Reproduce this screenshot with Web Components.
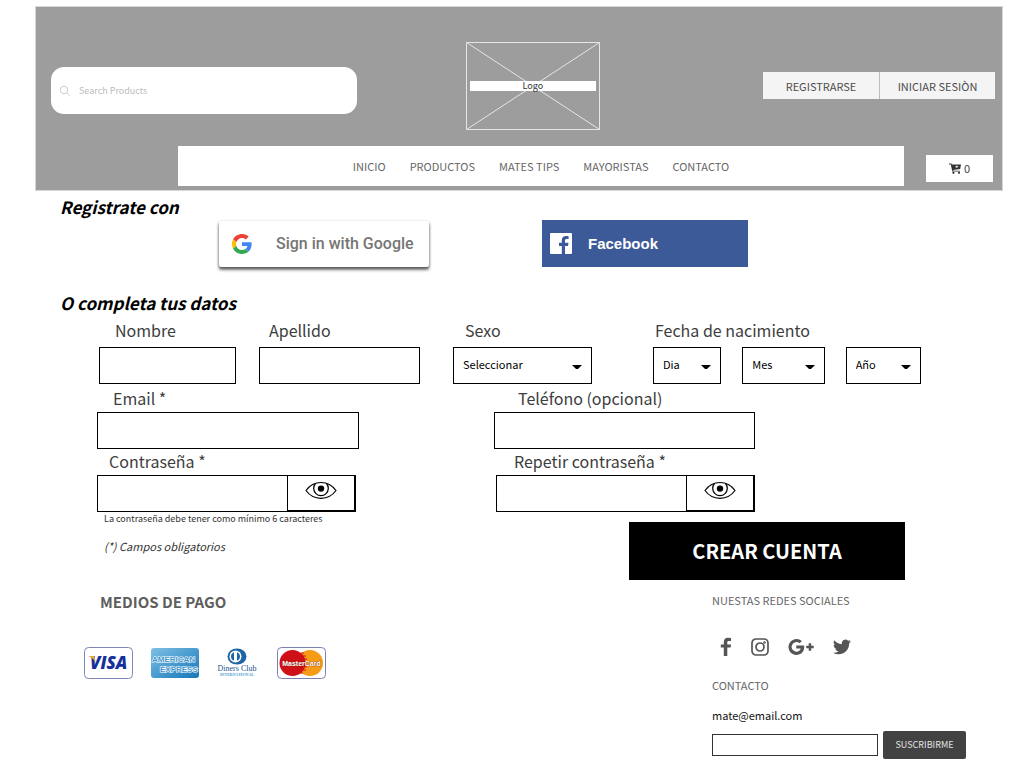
<!DOCTYPE html>
<html lang="es">
<head>
<meta charset="utf-8">
<title>Crear cuenta</title>
<style>
  body { margin: 0; background: #fff; color: #333; font-family: "Noto Sans CJK SC", "Noto Sans", sans-serif; font-size: 13px; }
</style>
</head>
<body>
<register-page></register-page>
<script>
const BASE = `*{box-sizing:border-box} :host{display:block} a{color:inherit;text-decoration:none}
button,input,select{font-family:inherit;margin:0;border-radius:0}`;
function define(name, css, html) {
  customElements.define(name, class extends HTMLElement {
    constructor() {
      super();
      const root = this.attachShadow({ mode: 'open' });
      const attr = key => this.getAttribute(key) || '';
      root.innerHTML = `<style>${BASE}${css}</style>` + (typeof html === 'function' ? html(attr) : html);
    }
  });
}

define('search-box', `
  form{display:flex;align-items:center;width:306px;max-width:100%;height:47px;border-radius:13px;background:#fff;padding:1px 8px 0;gap:8px}
  svg{width:12px;height:12px;flex:none}
  input{flex:1;min-width:0;border:0;outline:0;background:none;font-size:9px;line-height:16px;padding:0;color:#555}
  input::placeholder{color:#bcbcbc;opacity:1}`,
  `<form role="search"><svg viewBox="0 0 12 12" fill="none" stroke="#ccc"><circle cx="5" cy="5" r="3.7"/><path d="M7.7 7.7l3 3"/></svg>
  <input type="search" aria-label="Search Products" placeholder="Search Products"></form>`);

define('site-logo', `
  a{display:grid;width:134px;height:88px;align-items:center;color:#333}
  svg,span{grid-area:1/1}
  svg{width:134px;height:88px}
  span{background:#fff;margin:0 4px;height:10px;line-height:10px;font-size:9px;text-align:center;z-index:1}`,
  `<a href="#"><svg viewBox="0 0 134 88" fill="none" stroke="#e6e6e6"><path d="M.5 .5h133v87H.5zM.5 .5l133 87M133.5 .5l-133 87"/></svg><span>Logo</span></a>`);

define('auth-links', `
  nav{display:flex;height:27px;background:#f4f4f4}
  a{width:116px;text-align:center;font-size:11px;line-height:28px;color:#4c4c4c}
  a+a{border-left:1px solid #bbb}`,
  `<nav aria-label="Cuenta"><a href="#">REGISTRARSE</a><a href="#">INICIAR SESIÒN</a></nav>`);

define('main-nav', `
  nav{display:flex;justify-content:center;gap:24px;height:40px;background:#fff;line-height:40px;font-size:11px;color:#666}`,
  `<nav aria-label="Principal"><slot></slot></nav>`);

define('cart-button', `
  button{display:flex;align-items:center;justify-content:center;gap:3px;width:67px;height:27px;border:0;background:#fff;color:#444;font-size:11px;line-height:27px;padding:0}
  svg{width:12px;height:11px}`,
  `<button type="button" aria-label="Carrito: 0"><svg viewBox="0 0 12 11" fill="#333"><path d="M0 .5h2.4l.4 1.1H12L11.2 6 4.2 6.9l.2.8H11v.9H3.3L1.8 1.5H0z"/><circle cx="4.4" cy="9.8" r="1.1"/><circle cx="10" cy="9.8" r="1.1"/><path d="M6.3 3.7h3M7.8 2.6v2.4" stroke="#fff" stroke-width=".8"/></svg>0</button>`);

define('site-header', `
  header{background:#9d9d9d;border:1px solid #d6d6d6;padding:35px 7px 4px 15px}
  .top{display:grid;grid-template-columns:211fr 134px 201fr;align-items:center}
  search-box{padding-top:8px}
  auth-links{justify-self:end;padding-bottom:2px}
  .bottom{display:flex;gap:22px;margin-top:16px;padding:0 2px 0 127px}
  main-nav{flex:1}
  cart-button{align-self:end;padding-bottom:4px}`,
  `<header><div class="top"><search-box></search-box><site-logo></site-logo><auth-links></auth-links></div>
  <div class="bottom"><main-nav><a href="#">INICIO</a><a href="#">PRODUCTOS</a><a href="#">MATES TIPS</a><a href="#">MAYORISTAS</a><a href="#">CONTACTO</a></main-nav>
  <cart-button></cart-button></div></header>`);

define('section-title', `h2{margin:0;font-size:17px;line-height:26px;font-weight:700;font-style:italic;color:#000}`, `<h2><slot></slot></h2>`);

define('google-button', `
  button{display:flex;align-items:center;gap:24px;width:210px;height:46px;border:0;border-radius:2px;background:#fff;padding:0 0 0 13px;box-shadow:0 3px 3px rgba(0,0,0,.5),0 1px 3px rgba(0,0,0,.4);font:500 16px/24px Roboto,sans-serif;color:#757575;white-space:nowrap}
  svg{width:20px;height:20px;flex:none}`,
  `<button type="button"><svg viewBox="0 0 48 48"><path fill="#EA4335" d="M24 9.5c3.54 0 6.71 1.22 9.21 3.6l6.85-6.85C35.9 2.38 30.47 0 24 0 14.62 0 6.51 5.38 2.56 13.22l7.98 6.19C12.43 13.72 17.74 9.5 24 9.5z"/><path fill="#4285F4" d="M46.98 24.55c0-1.57-.15-3.09-.38-4.55H24v9.02h12.94c-.58 2.96-2.26 5.48-4.78 7.18l7.73 6c4.51-4.18 7.09-10.36 7.09-17.65z"/><path fill="#FBBC05" d="M10.53 28.59A14.5 14.5 0 0 1 9.77 24c0-1.6.28-3.14.76-4.59l-7.98-6.19A23.9 23.9 0 0 0 0 24c0 3.88.92 7.54 2.56 10.78z"/><path fill="#34A853" d="M24 48c6.48 0 11.93-2.13 15.89-5.81l-7.73-6c-2.15 1.45-4.92 2.3-8.16 2.3-6.26 0-11.57-4.22-13.47-9.91l-7.98 6.19C6.51 42.62 14.62 48 24 48z"/></svg>Sign in with Google</button>`);

define('facebook-button', `
  button{display:flex;align-items:center;gap:16px;width:206px;height:47px;border:0;background:#3d5a98;padding:0 0 0 8px;font:700 15px/24px "Liberation Sans",Arial,sans-serif;color:#fff}
  svg{width:22px;height:21px;flex:none}`,
  `<button type="button"><svg viewBox="0 0 22 21"><path fill="#fff" d="M1 0h20a1 1 0 0 1 1 1v19a1 1 0 0 1-1 1h-6v-8h3l.5-3.2H15V7.700c0-1 .4-1.600 1.700-1.600h1.900V3.200C18.200 3.100 17.200 3 16.200 3c-2.700 0-4.400 1.500-4.400 4.300v2.500H9V13h2.800v8H1a1 1 0 0 1-1-1V1a1 1 0 0 1 1-1z"/></svg>Facebook</button>`);

const FIELD = `
  :host{min-width:0}
  label{display:block;padding-left:var(--indent,12px);margin-bottom:var(--label-gap,2px);font-size:16px;line-height:24px;color:#3d3d3d;white-space:nowrap}
  input{display:block;width:100%;height:37px;border:1px solid #000;background:#fff;padding:0 9px;font-size:14px}`;

define('text-field', FIELD, a => `<label for="f">${a('label')}</label><input id="f" type="${a('type') || 'text'}">`);

define('password-field', FIELD + `
  .row{display:flex}
  input{flex:1;min-width:0;border-right:0}
  button{width:69px;height:37px;border:solid #000;border-width:1px 2px 2px 1px;background:#fff;padding:0 0 6px;display:grid;place-items:center}
  svg{width:32px;height:19px}`,
  a => `<label for="f">${a('label')}</label><div class="row"><input id="f" type="password"><button type="button" aria-label="Mostrar contraseña"><svg viewBox="0 0 32 19" fill="none" stroke="#000" stroke-width="1.2"><path d="M1 9.500C5 4 10 1.500 16 1.500s11 2.500 15 8C27 15 22 17.300 16 17.300S5 15 1 9.500z"/><path d="M10.500 2.500a7.300 7.300 0 1 0 11 0"/><circle cx="16" cy="7.600" r="3.200" fill="#000" stroke="none"/></svg></button></div>`);

define('drop-down', `
  :host{min-width:0}
  div{display:grid;align-items:center}
  select,svg{grid-area:1/1}
  select{appearance:none;width:100%;height:37px;border:1px solid #000;background:#fff;padding:0 9px 3px;font-size:11px;color:#000}
  svg{width:10px;height:4px;justify-self:end;margin:3px 10px 0 0;pointer-events:none}`,
  a => `<div><select aria-label="${a('label')}"><option>${a('value')}</option></select><svg viewBox="0 0 10 4"><path d="M0 0h10L6.500 3.400Q5 4.600 3.500 3.400z"/></svg></div>`);

define('field-group', `
  :host{min-width:0}
  fieldset{border:0;margin:0;padding:0;min-width:0}
  legend{display:block;padding:0 0 0 var(--indent,12px);margin-bottom:var(--label-gap,2px);font-size:16px;line-height:24px;color:#3d3d3d;white-space:nowrap}
  .row{display:flex;gap:21px}
  ::slotted(*){flex:1}`,
  a => `<fieldset><legend>${a('label')}</legend><div class="row"><slot></slot></div></fieldset>`);

define('register-form', `
  form{padding:2px 103px 0 97px}
  .row{display:flex}
  .names{--label-gap:5px;padding-left:2px}
  .names + .row{margin-top:2px}
  .names :nth-child(1){flex:137;--indent:16px}
  .names :nth-child(2){flex:161;margin-left:23px;--indent:10px}
  .names :nth-child(3){flex:139;margin-left:33px;--indent:12px}
  .names > :nth-child(4){flex:268;margin-left:61px;--indent:2px}
  .names drop-down:nth-child(n){margin:0}
  .names field-group drop-down:nth-child(1){flex:68}
  .names field-group drop-down:nth-child(2){flex:82}
  .names field-group drop-down:nth-child(3){flex:75}
  .pair{display:grid;grid-template-columns:262fr 135fr 261fr 166fr}
  .pair > :last-child{grid-column:3}
  .contact > :first-child{--indent:16px}
  .contact > :last-child{--indent:24px}
  .secret{grid-template-columns:259fr 140fr 259fr 166fr}
  .secret > :last-child{--indent:18px}
  .end{display:flex;justify-content:space-between;padding-right:16px}
  .end p{margin:0;padding-left:7px}
  .hint{font-size:9px;line-height:14px}
  .end .required{font-size:11px;line-height:16px;font-style:italic;margin-top:12px}
  button{width:276px;height:58px;margin-top:10px;border:0;background:#000;color:#fff;font-size:20px;line-height:28px;font-weight:700;padding:0}`,
  `<form>
  <div class="row names"><text-field label="Nombre"></text-field><text-field label="Apellido"></text-field>
   <field-group label="Sexo"><drop-down label="Sexo" value="Seleccionar"></drop-down></field-group>
   <field-group label="Fecha de nacimiento"><drop-down label="Día de nacimiento" value="Dia"></drop-down><drop-down label="Mes de nacimiento" value="Mes"></drop-down><drop-down label="Año de nacimiento" value="Año"></drop-down></field-group></div>
  <div class="row pair contact"><text-field label="Email *" type="email"></text-field><text-field label="Teléfono (opcional)" type="tel"></text-field></div>
  <div class="row pair secret"><password-field label="Contraseña *"></password-field><password-field label="Repetir contraseña *"></password-field></div>
  <div class="end"><div><p class="hint">La contraseña debe tener como mínimo 6 caracteres</p><p class="required">(*) Campos obligatorios</p></div>
  <button type="submit">CREAR CUENTA</button></div></form>`);

define('payment-methods', `
  h3{margin:0;padding-left:16px;font-size:15px;line-height:22px;font-weight:700;color:#5e5e5e}
  ul{display:flex;align-items:center;gap:18px;list-style:none;margin:34px 0 0;padding:0}
  li,svg{display:block}
  svg{height:32px}`,
  `<h3>MEDIOS DE PAGO</h3><ul>
  <li><svg width="49" viewBox="0 0 49 32"><rect x=".5" y=".5" width="48" height="31" rx="4" fill="#fff" stroke="#7d86b8"/><text x="6" y="22" font-family="Open Sans" font-weight="800" font-style="italic" font-size="17" fill="#15309a">VISA</text><path d="M4 9h6l2 7C10 12 7 10 4 9z" fill="#e9a33c"/></svg></li>
  <li><svg width="48" viewBox="0 0 48 32"><defs><linearGradient id="g" x2="1" y2="1"><stop stop-color="#7ec0e6"/><stop offset="1" stop-color="#1677b8"/></linearGradient></defs><rect y="1" width="48" height="30" rx="3" fill="url(#g)"/><g font-family="Liberation Sans" font-weight="700" font-size="8" fill="#3f95cb" stroke="#fff" stroke-width="1.200" paint-order="stroke"><text x="1" y="15">AMERICAN</text><text x="9" y="25">EXPRESS</text></g></svg></li>
  <li><svg width="42" viewBox="0 0 42 32"><ellipse cx="20" cy="9.500" rx="9.500" ry="8" fill="#1d64a5"/><circle cx="18.500" cy="9.500" r="6" fill="#fff"/><path d="M17 5.200v8.600a4.600 4.600 0 0 1 0-8.600zM20 5.200v8.600a4.600 4.600 0 0 0 0-8.600z" fill="#1d64a5"/><text x="20" y="24" text-anchor="middle" font-family="Liberation Serif" font-size="8" fill="#1b568f">Diners Club</text><text x="20" y="29" text-anchor="middle" font-family="Liberation Serif" font-weight="700" font-size="4" fill="#4a9bd0">INTERNATIONAL</text></svg></li>
  <li><svg width="49" viewBox="0 0 49 32"><rect x=".5" y=".5" width="48" height="31" rx="4" fill="#fff" stroke="#7d7fb0"/><circle cx="33" cy="16" r="13" fill="#f79b16"/><circle cx="15.500" cy="16" r="13" fill="#cf1016"/><path d="M24 6h3M23 9h6M23 12h7M23 20h7M23 23h6M23 26h3" stroke="#cf1016"/><text x="24.500" y="19" text-anchor="middle" font-family="Liberation Sans" font-weight="700" font-size="7" fill="#fff" stroke="#7a2010" stroke-width=".6" paint-order="stroke">MasterCard</text></svg></li></ul>`);

define('social-links', `
  h3{margin:0;font-size:11px;line-height:16px;font-weight:400;color:#666}
  nav{display:flex;align-items:center;margin:27px 0 0 8px;height:24px;gap:19px;color:#555}
  svg{display:block;fill:currentColor}`,
  `<h3>NUESTAS REDES SOCIALES</h3><nav aria-label="Redes sociales">
  <a href="#" aria-label="Facebook"><svg width="12" height="20" viewBox="0 0 12 20"><path d="M11 1v3.100H8.900c-1 0-1.600.4-1.600 1.500V7.400H11l-.4 3.200H7.300V19H3.800v-8.400H.8V7.400h3V5C3.800 2.200 5.500.700 8 .700z"/></svg></a>
  <a href="#" aria-label="Instagram"><svg width="18" height="18" viewBox="0 0 18 18" style="fill:none" stroke="currentColor" stroke-width="1.700"><rect x="1" y="1" width="16" height="16" rx="4"/><circle cx="9" cy="9" r="4"/><circle cx="13.500" cy="4.500" r=".5"/></svg></a>
  <a href="#" aria-label="Google+"><svg width="26" height="18" viewBox="0 0 26 18"><path d="M8.200 7.400v3.100h4.500c-.4 1.900-1.900 3.200-4.300 3.200A4.800 4.800 0 1 1 11.600 5.300l2.300-2.200A8 8 0 1 0 8.400 17c4.600 0 7.800-3.200 7.800-7.900 0-.6 0-1.100-.2-1.700zM20.700 5.300h2.500v2.500h2.500v2.500h-2.500v2.500h-2.500v-2.500h-2.500V7.800h2.500z"/></svg></a>
  <a href="#" aria-label="Twitter"><svg width="18" height="16" viewBox="0 2 24 20"><path d="M23.950 4.570a10 10 0 0 1-2.820.770 4.960 4.960 0 0 0 2.160-2.720c-.950.550-2 .950-3.130 1.180a4.920 4.920 0 0 0-8.380 4.480C7.690 8.090 4.070 6.130 1.640 3.160a4.820 4.820 0 0 0-.670 2.480c0 1.710.870 3.210 2.190 4.100a4.900 4.900 0 0 1-2.230-.620v.060a4.920 4.920 0 0 0 3.950 4.830 5 5 0 0 1-2.210.080 4.940 4.940 0 0 0 4.600 3.420A9.870 9.870 0 0 1 0 19.540a13.990 13.990 0 0 0 7.550 2.210c9.050 0 14-7.500 14-13.980l-.020-.640a9.940 9.940 0 0 0 2.420-2.560z"/></svg></a></nav>`);

define('contact-block', `
  h3{margin:0;font-size:11px;line-height:16px;font-weight:400;color:#666}
  .mail{display:block;margin-top:12px;font-size:11px;line-height:20px;color:#111}
  form{display:flex;align-items:center;gap:5px;margin-top:6px}
  input{flex:1;min-width:0;height:22px;border:1px solid #333;background:#fff;padding:0 6px;font-size:11px}
  button{width:83px;height:28px;border:0;border-radius:2px;background:#424242;color:#e2e2e2;font-size:9px;line-height:16px;padding:0}`,
  `<h3>CONTACTO</h3><a class="mail" href="mailto:mate@email.com">mate@email.com</a>
  <form><input type="email" aria-label="Email"><button type="submit">SUSCRIBIRME</button></form>`);

define('site-footer', `
  footer{display:flex;justify-content:space-between;padding:11px 58px 0 84px}
  .side{width:254px;padding-top:1px}
  contact-block{margin-top:18px}`,
  `<footer><payment-methods></payment-methods><div class="side"><social-links></social-links><contact-block></contact-block></div></footer>`);

define('register-page', `
  site-header{margin:6px 21px 0 35px}
  section-title{padding-left:60px}
  .first{padding-top:3px}
  .social{display:flex;align-items:end;gap:113px;padding:0 0 23px 219px}`,
  `<site-header></site-header>
  <main><section-title class="first">Registrate con</section-title>
  <div class="social"><google-button></google-button><facebook-button></facebook-button></div>
  <section-title>O completa tus datos</section-title>
  <register-form></register-form></main>
  <site-footer></site-footer>`);
</script>
</body>
</html>
